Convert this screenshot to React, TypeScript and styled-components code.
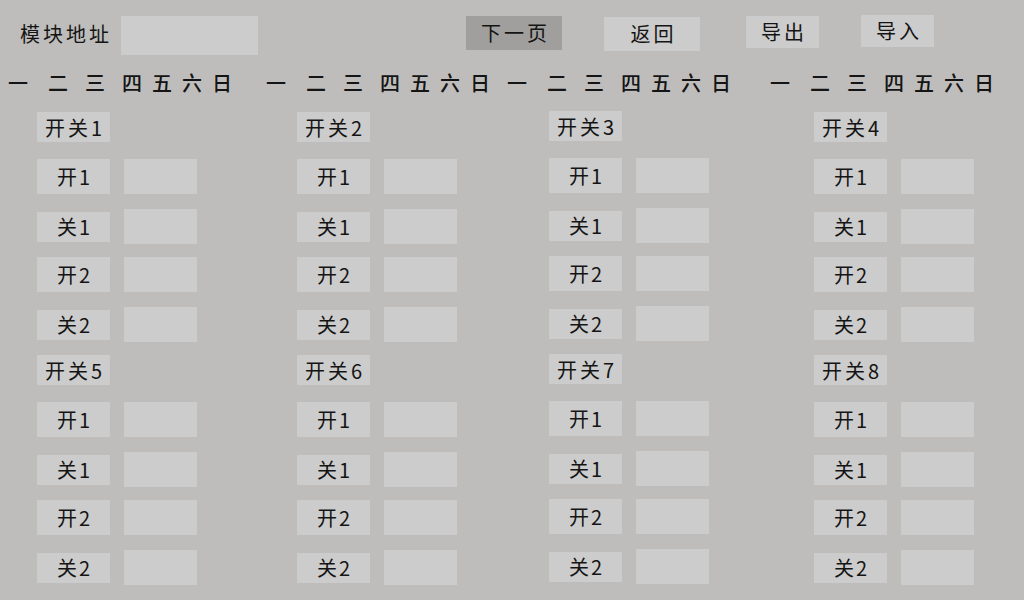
import React from "react";
import styled, { createGlobalStyle } from "styled-components";

const Global = createGlobalStyle`
  html, body { margin: 0; padding: 0; }
  body {
    background: #bebdbb;
    width: 1024px;
    height: 600px;
    overflow: hidden;
    font-family: "Noto Sans CJK SC", "Noto Sans", sans-serif;
    color: #141414;
  }
`;

const Page = styled.div`
  width: 1024px;
  height: 600px;
  background: #bebdbb;
  display: flex;
  flex-direction: column;
`;

const TopBar = styled.div`
  display: flex;
  align-items: flex-start;
  padding-top: 15px;
  height: 57px;
  box-sizing: border-box;
`;

const AddrLabel = styled.div`
  margin-left: 20px;
  margin-top: 5px;
  width: 101px;
  font-size: 20px;
  letter-spacing: 3px;
  line-height: 28px;
`;

const AddrInput = styled.div`
  margin-top: 1px;
  width: 137px;
  height: 39px;
  background: #cccccc;
`;

const Btn = styled.div<{ $x: number; $y: number; $w: number; $h: number; $dark?: boolean }>`
  margin-left: ${(p) => p.$x}px;
  margin-top: ${(p) => p.$y}px;
  width: ${(p) => p.$w}px;
  height: ${(p) => p.$h}px;
  background: ${(p) => (p.$dark ? "#a09f9d" : "#cccccc")};
  display: flex;
  align-items: center;
  justify-content: center;
  font-size: 20px;
  letter-spacing: 3px;
  text-indent: 3px;
  padding-bottom: 2px;
  box-sizing: border-box;
`;

const WeekRow = styled.div`
  display: grid;
  grid-template-columns: 258px 241px 263px auto;
  padding: 14px 0 17px 8px;
  align-items: center;
`;

const Week = styled.div`
  display: flex;
  font-size: 20px;
  line-height: 24px;
  font-weight: 500;
`;

const Day = styled.span<{ $w: number }>`
  width: ${(p) => p.$w}px;
  flex: none;
`;

const Grid = styled.div`
  display: grid;
  grid-template-columns: 260px 252px 265px auto;
  padding-left: 37px;
`;

const Column = styled.div<{ $shift?: number }>`
  display: flex;
  flex-direction: column;
  margin-top: ${(p) => p.$shift ?? 0}px;
`;

const Header = styled.div<{ $gap: number }>`
  margin-top: ${(p) => p.$gap}px;
  width: 73px;
  height: 30px;
  background: #cccccc;
  display: flex;
  align-items: center;
  justify-content: center;
  font-size: 20px;
  letter-spacing: 3px;
  text-indent: 3px;
`;

const Row = styled.div<{ $gap: number }>`
  margin-top: ${(p) => p.$gap}px;
  display: flex;
  align-items: center;
  gap: 14px;
  height: 35px;
`;

const Label = styled.div<{ $tall: boolean }>`
  width: 73px;
  height: ${(p) => (p.$tall ? 35 : 30)}px;
  background: #cccccc;
  display: flex;
  align-items: center;
  justify-content: center;
  font-size: 20px;
  letter-spacing: 2px;
  text-indent: 2px;
`;

const Value = styled.div`
  width: 73px;
  height: 35px;
  background: #cccccc;
`;

const days = ["一", "二", "三", "四", "五", "六", "日"];
const dayWidths = [40, 37, 37, 30, 30, 30, 24];

const rows = [
  { t: "开1", tall: true, gap: 17 },
  { t: "关1", tall: false, gap: 15 },
  { t: "开2", tall: true, gap: 13 },
  { t: "关2", tall: false, gap: 15 },
];

function Block({ n, first }: { n: number; first: boolean }) {
  return (
    <>
      <Header $gap={first ? 0 : 13}>开关{n}</Header>
      {rows.map((r) => (
        <Row key={r.t} $gap={r.gap}>
          <Label $tall={r.tall}>{r.t}</Label>
          <Value />
        </Row>
      ))}
    </>
  );
}

export default function App() {
  return (
    <Page>
      <Global />
      <TopBar>
        <AddrLabel>模块地址</AddrLabel>
        <AddrInput />
        <Btn $x={208} $y={1} $w={96} $h={34} $dark>
          下一页
        </Btn>
        <Btn $x={42} $y={2} $w={96} $h={34}>
          返回
        </Btn>
        <Btn $x={46} $y={1} $w={73} $h={32}>
          导出
        </Btn>
        <Btn $x={42} $y={0} $w={73} $h={32}>
          导入
        </Btn>
      </TopBar>
      <WeekRow>
        {[0, 1, 2, 3].map((g) => (
          <Week key={g}>
            {days.map((d, i) => (
              <Day key={i} $w={dayWidths[i]}>
                {d}
              </Day>
            ))}
          </Week>
        ))}
      </WeekRow>
      <Grid>
        {[0, 1, 2, 3].map((c) => (
          <Column key={c} $shift={c === 2 ? -1 : 0}>
            <Block n={c + 1} first />
            <Block n={c + 5} first={false} />
          </Column>
        ))}
      </Grid>
    </Page>
  );
}
